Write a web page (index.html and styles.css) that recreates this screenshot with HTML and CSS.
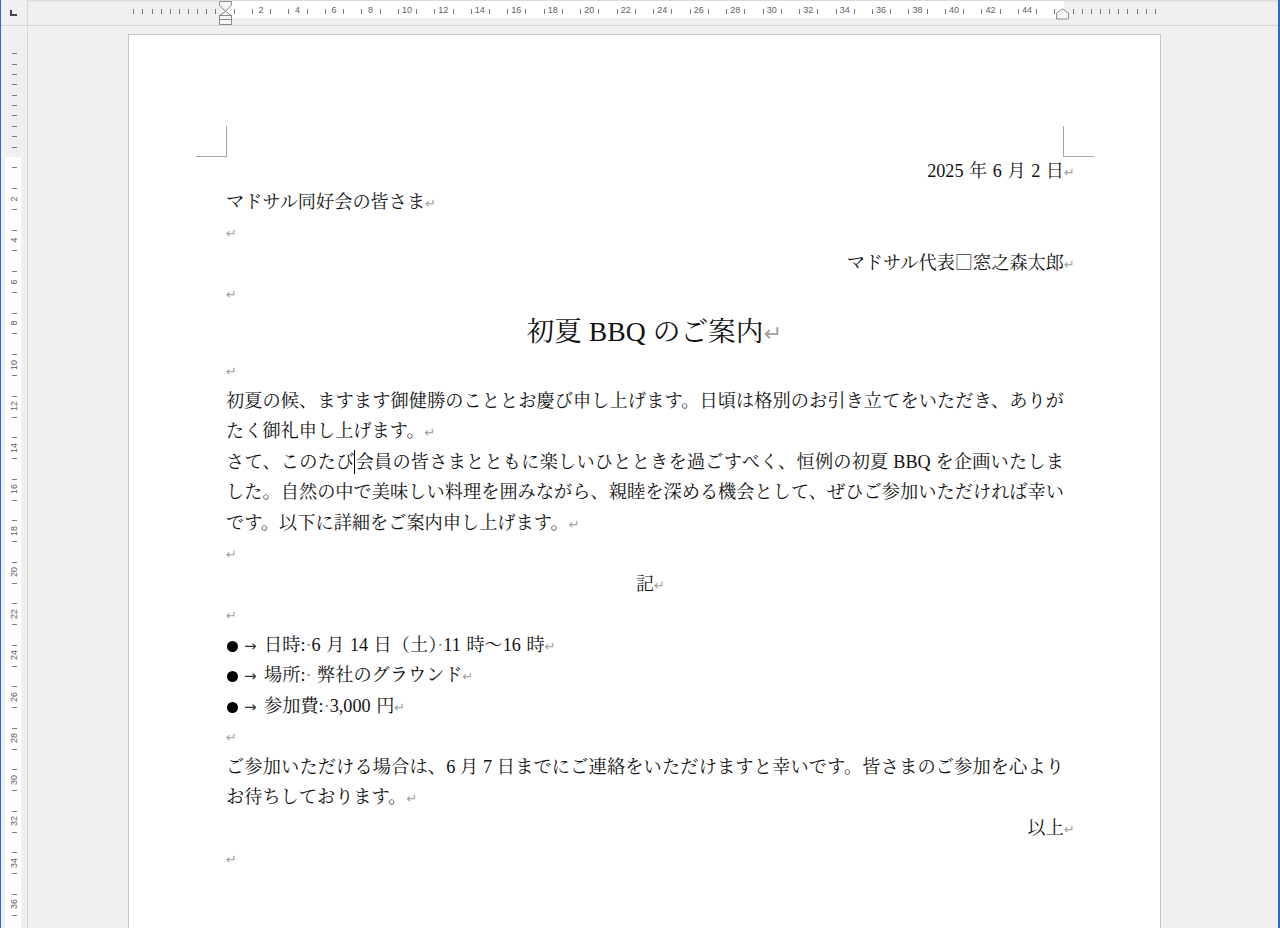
FILE: index.html
```html
<!DOCTYPE html>
<html lang="ja">
<head>
  <meta charset="UTF-8" />
  <meta name="viewport" content="width=device-width, initial-scale=1" />
  <title>初夏 BBQ のご案内</title>
  <link rel="stylesheet" href="styles.css">
</head>
<body>
  <div class="app">
    <div class="corner"><span class="tab-sel"></span></div>

    <div class="hruler" id="hruler">
      <div class="hr-band"></div>
      <svg class="ind-left" width="13" height="26" viewBox="0 0 13 26">
        <path d="M0.5 1.5 H12.5 V5 L6.5 11.5 L0.5 5 Z" fill="#f6f6f6" stroke="#8c8c8c" />
        <path d="M6.5 11.5 L12.5 15.5 H0.5 Z" fill="#f6f6f6" stroke="#8c8c8c" />
        <rect x="0.5" y="15.5" width="12" height="4" fill="#f6f6f6" stroke="#8c8c8c" />
        <rect x="0.5" y="19.5" width="12" height="5" fill="#f6f6f6" stroke="#8c8c8c" />
      </svg>
      <svg class="ind-right" width="13" height="12" viewBox="0 0 13 12">
        <path d="M0.5 11 V5 L6.5 0.8 L12.5 5 V11 Z" fill="#f6f6f6" stroke="#8c8c8c" />
      </svg>
    </div>

    <div class="vruler" id="vruler">
      <div class="vr-band"></div>
    </div>

    <div class="workspace">
      <div class="page">
        <div class="text">
          <p class="r">2025 年 6 月 2 日<span class="pm">↵</span></p>
          <p>マドサル同好会の皆さま<span class="pm">↵</span></p>
          <p><span class="pm">↵</span></p>
          <p class="r">マドサル代表<span class="zs">□</span>窓之森太郎<span class="pm">↵</span></p>
          <p><span class="pm">↵</span></p>
          <p class="title">初夏 BBQ のご案内<span class="pm">↵</span></p>
          <p><span class="pm">↵</span></p>
          <p>初夏の候、ますます御健勝のこととお慶び申し上げます。日頃は格別のお引き立てをいただき、ありがたく御礼申し上げます。<span class="pm">↵</span></p>
          <p>さて、このたび<span class="caret"></span>会員の皆さまとともに楽しいひとときを過ごすべく、恒例の初夏 BBQ を企画いたしました。自然の中で美味しい料理を囲みながら、親睦を深める機会として、ぜひご参加いただければ幸いです。以下に詳細をご案内申し上げます。<span class="pm">↵</span></p>
          <p><span class="pm">↵</span></p>
          <p class="c">記<span class="pm">↵</span></p>
          <p><span class="pm">↵</span></p>
          <p class="li"><span class="bul"></span><span class="tab">→</span>日時:<span class="sp">·</span>6 月 14 日（土）<span class="sp">·</span>11 時～16 時<span class="pm">↵</span></p>
          <p class="li"><span class="bul"></span><span class="tab">→</span>場所:<span class="sp">·</span> 弊社のグラウンド<span class="pm">↵</span></p>
          <p class="li"><span class="bul"></span><span class="tab">→</span>参加費:<span class="sp">·</span>3,000 円<span class="pm">↵</span></p>
          <p><span class="pm">↵</span></p>
          <p>ご参加いただける場合は、6 月 7 日までにご連絡をいただけますと幸いです。皆さまのご参加を心よりお待ちしております。<span class="pm">↵</span></p>
          <p class="r">以上<span class="pm">↵</span></p>
          <p><span class="pm">↵</span></p>
        </div>
      </div>
    </div>
  </div>

  <script>
const hruler = document.getElementById('hruler');
const vruler = document.getElementById('vruler');

// ruler origins in window pixels
const X0 = 224.5, XU = 18.24, HX = 28;
const Y0 = 157, YU = 20.76, VY = 26;

function mark(parent, cls, left, top, text) {
  const el = document.createElement('span');
  el.className = cls;
  if (left !== null) el.style.left = left + 'px';
  if (top !== null) el.style.top = top + 'px';
  if (text) el.textContent = text;
  parent.appendChild(el);
}

// top ruler
for (let j = 1; j <= 10; j++) {
  mark(hruler, 'ht', Math.round(X0 - j * XU / 2 - HX), null);
  mark(hruler, 'ht', Math.round(X0 + 46 * XU + j * XU / 2 - HX), null);
}
for (let k = 0; k < 46; k++) {
  mark(hruler, 'ht', Math.round(X0 + (k + 0.5) * XU - HX), null);
}
for (let k = 2; k <= 44; k += 2) {
  mark(hruler, 'hn', X0 + k * XU - HX, null, String(k));
}

// left ruler
for (let j = 1; j <= 10; j++) {
  mark(vruler, 'vt', null, Math.round(Y0 - j * YU / 2 - VY));
}
for (let k = 0; Y0 + (k + 0.5) * YU < 928; k++) {
  mark(vruler, 'vt', null, Math.round(Y0 + (k + 0.5) * YU - VY));
}
for (let k = 2; k <= 36; k += 2) {
  mark(vruler, 'vn', null, Y0 + k * YU - VY, String(k));
}
  </script>
</body>
</html>
```

FILE: styles.css
```css
* {
  margin: 0; padding: 0; box-sizing: border-box;
}
body {
  background-color: #f0f0f0;
  overflow: hidden;
  font-family: "Liberation Serif", "Noto Serif CJK JP", "Noto Sans CJK JP", serif;
}
.app {
  display: grid;
  grid-template-columns: 27px 1fr;
  grid-template-rows: 26px 1fr;
  height: 928px;
  border-left: 1px solid #2b6cd4;
  border-right: 2px solid #2b6cd4;
}

/* rulers */
.corner {
  border-right: 1px solid #d6d6d6;
  border-bottom: 1px solid #d6d6d6;
  padding: 10px 0 0 9px;
}
.tab-sel {
  display: block;
  width: 7px;
  height: 6px;
  border-left: 2px solid #454545;
  border-bottom: 2px solid #454545;
}
.hruler {
  position: relative;
  border-bottom: 1px solid #d6d6d6;
  box-shadow: inset 0 2px 2px -1px rgba(0, 0, 0, 0.12);
}
.hr-band {
  margin: 1px 0 0 196.5px;
  width: 839px;
  height: 17px;
  background: #fff;
}
.ht {
  position: absolute;
  top: 9px;
  width: 1px;
  height: 5px;
  background: #7c7c7c;
}
.hn {
  position: absolute;
  top: 10px;
  transform: translate(-50%, -50%);
  font-family: "Liberation Sans", Arial, sans-serif;
  font-size: 9px;
  line-height: 1;
  color: #5e5e5e;
}
.ind-left {
  position: absolute;
  left: 191px;
  top: 0;
}
.ind-right {
  position: absolute;
  left: 1028px;
  top: 8px;
}
.vruler {
  position: relative;
  overflow: hidden;
  border-right: 1px solid #d6d6d6;
}
.vr-band {
  margin: 131px 0 0 4px;
  width: 16px;
  height: 800px;
  background: #fff;
}
.vt {
  position: absolute;
  left: 11px;
  width: 5px;
  height: 1px;
  background: #7c7c7c;
}
.vn {
  position: absolute;
  left: 13px;
  transform: translate(-50%, -50%) rotate(-90deg);
  font-family: "Liberation Sans", Arial, sans-serif;
  font-size: 9px;
  line-height: 1;
  color: #5e5e5e;
}

/* document */
.workspace {
  overflow: hidden;
}
.page {
  margin: 8px 0 0 100px;
  width: 1033px;
  min-height: 1100px;
  background: #fff;
  border: 1px solid #c6c6c6;
  padding: 121px 96px 0 97px;
}
.text {
  position: relative;
  font-size: 18.2px;
  line-height: 30.5px;
  color: #111;
}
.text::before,
.text::after {
  content: '';
  position: absolute;
  top: -30px;
  width: 30px;
  height: 30px;
  border-bottom: 1px solid #a6a6a6;
}
.text::before {
  left: -30px;
  border-right: 1px solid #a6a6a6;
}
.text::after {
  right: -30px;
  border-left: 1px solid #a6a6a6;
}
.text p {
  text-align: justify;
}
.text p.r { text-align: right; }
.text p.c { text-align: center; }
.text p.r,
.text p.li {
  word-spacing: 1px;
}
.text p.title {
  text-align: center;
  font-size: 27.7px;
  line-height: 46.5px;
}
.pm {
  display: inline-block;
  width: 0;
  white-space: nowrap;
  font-family: "DejaVu Sans", sans-serif;
  font-size: 13px;
  line-height: 1;
  color: #a0a0a0;
}
.title .pm {
  font-size: 22px;
}
.zs {
  font-family: "Noto Sans CJK JP", sans-serif;
  line-height: 1;
  color: #333;
}
.caret {
  display: inline-block;
  width: 0;
  height: 24px;
  border-left: 1px solid #000;
  vertical-align: -6px;
}
.bul {
  display: inline-block;
  width: 11px;
  height: 11px;
  border-radius: 50%;
  background: #000;
  margin: 0 6px 0 1px;
  vertical-align: -1px;
}
.tab {
  display: inline-block;
  width: 20px;
  font-family: "DejaVu Sans", sans-serif;
  font-size: 15px;
  line-height: 1;
  color: #333;
}
.sp {
  color: #8a8a8a;
}
```
